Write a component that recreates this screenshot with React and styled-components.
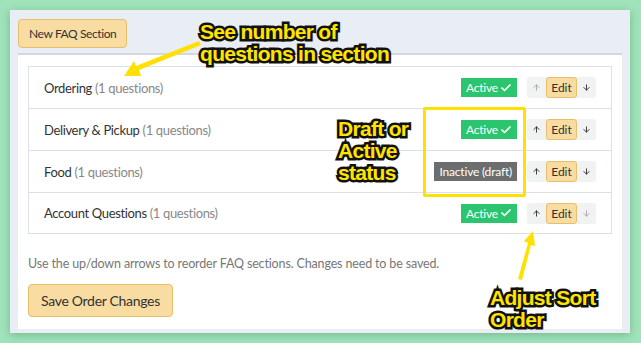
import React from "react";
import styled, { createGlobalStyle } from "styled-components";
import { Check, ArrowUp, ArrowDown } from "lucide-react";

const GlobalStyle = createGlobalStyle`
  html, body {
    margin: 0;
    padding: 0;
    background: #a0e3ba;
    font-family: "Lato", "Open Sans", sans-serif;
  }
  #root {
    position: relative;
    width: 641px;
    height: 343px;
    overflow: hidden;
  }
`;

const Page = styled.div`
  padding: 10px 11px 10px 10px;
`;

const Panel = styled.div`
  background: #e9edf4;
  padding: 9px 8px 4px 8px;
  box-shadow: 0 2px 8px rgba(0, 60, 20, 0.25);
  display: flex;
  flex-direction: column;
  gap: 5px;
  height: 310px;
`;

const Button = styled.button`
  align-self: flex-start;
  font-family: inherit;
  font-size: ${(p) => (p.$big ? "14px" : "12px")};
  letter-spacing: ${(p) => (p.$big ? "-0.3px" : "-0.4px")};
  color: #333;
  background: #f8dca2;
  border: 1px solid #e6bf6c;
  border-radius: 4px;
  height: ${(p) => (p.$big ? "33px" : "29px")};
  padding: 0 ${(p) => (p.$big ? "12px" : "10px")};
  cursor: pointer;
`;

const Card = styled.div`
  flex: 1;
  background: #fff;
  border-top: 2px solid #d3d8e0;
  padding: 11px 10px 0 10px;
  display: flex;
  flex-direction: column;
`;

const List = styled.div`
  border: 1px solid #dde1e6;
`;

const Row = styled.div`
  height: 41px;
  display: flex;
  align-items: center;
  padding: 0 15px 0 15px;
  & + & {
    border-top: 1px solid #dde1e6;
  }
  &:last-child {
    height: 40px;
  }
`;

const Name = styled.span`
  flex: 1;
  font-size: 13px;
  letter-spacing: -0.35px;
  color: #333;
`;

const Count = styled.span`
  color: #888;
`;

const Badge = styled.span`
  display: inline-flex;
  align-items: center;
  gap: 2px;
  height: 19px;
  padding: 0 5px;
  font-size: 12px;
  letter-spacing: -0.2px;
  color: #fff;
  background: ${(p) => (p.$active ? "#2bc56d" : "#6d6d6d")};
  margin-right: 10px;
`;

const Group = styled.div`
  display: flex;
  align-items: stretch;
  height: 21px;
  background: #f0f3f1;
  border-radius: 3px;
`;

const Arrow = styled.span`
  width: 19px;
  display: flex;
  align-items: center;
  justify-content: center;
  color: ${(p) => (p.$disabled ? "#a8a8a8" : "#333")};
`;

const Edit = styled.span`
  width: 29px;
  display: flex;
  align-items: center;
  justify-content: center;
  font-size: 12px;
  color: #333;
  background: #f8dca2;
  border: 1px solid #e6bf6c;
  border-radius: 3px;
`;

const Help = styled.p`
  margin: 22px 0 13px;
  font-size: 12.5px;
  letter-spacing: -0.15px;
  color: #777;
`;

const Note = styled.div`
  position: absolute;
  left: ${(p) => p.$x}px;
  top: ${(p) => p.$y}px;
  font-family: "Liberation Sans", Arial, sans-serif;
  font-weight: bold;
  font-size: 21px;
  line-height: 22px;
  letter-spacing: -0.7px;
  color: #ffe400;
  -webkit-text-stroke: 5px #111;
  paint-order: stroke fill;
  white-space: nowrap;
`;

const Frame = styled.div`
  position: absolute;
  left: 423px;
  top: 107px;
  width: 97px;
  height: 84px;
  border: 3px solid #ffe000;
  border-radius: 2px;
`;

const Arrows = styled.svg`
  position: absolute;
  left: 0;
  top: 0;
  pointer-events: none;
`;

const sections = [
  { name: "Ordering", active: true, first: true },
  { name: "Delivery & Pickup", active: true },
  { name: "Food", active: false },
  { name: "Account Questions", active: true, last: true },
];

export default function App() {
  return (
    <>
      <GlobalStyle />
      <Page>
        <Panel>
          <Button>New FAQ Section</Button>
          <Card>
            <List>
              {sections.map((s) => (
                <Row key={s.name}>
                  <Name>
                    {s.name} <Count>(1 questions)</Count>
                  </Name>
                  <Badge $active={s.active}>
                    {s.active ? "Active" : "Inactive (draft)"}
                    {s.active && <Check size={12} strokeWidth={3.5} />}
                  </Badge>
                  <Group>
                    <Arrow $disabled={s.first}>
                      <ArrowUp size={9} strokeWidth={2.5} />
                    </Arrow>
                    <Edit>Edit</Edit>
                    <Arrow $disabled={s.last}>
                      <ArrowDown size={9} strokeWidth={2.5} />
                    </Arrow>
                  </Group>
                </Row>
              ))}
            </List>
            <Help>Use the up/down arrows to reorder FAQ sections. Changes need to be saved.</Help>
            <Button $big>Save Order Changes</Button>
          </Card>
        </Panel>
      </Page>
      <Arrows width="641" height="343">
        <polygon points="199,41 201,45 139,70 141,76 124,76 134,61 136,66" fill="#ffe000" />
        <polygon points="518,279 522,280 531,245 535,246 533,231 524,241 528,243" fill="#ffe000" />
      </Arrows>
      <Frame />
      <Note $x={200} $y={21}>
        See number of
        <br />
        questions in section
      </Note>
      <Note $x={338} $y={118}>
        Draft or
        <br />
        Active
        <br />
        status
      </Note>
      <Note $x={490} $y={287}>
        Adjust Sort
        <br />
        Order
      </Note>
    </>
  );
}
